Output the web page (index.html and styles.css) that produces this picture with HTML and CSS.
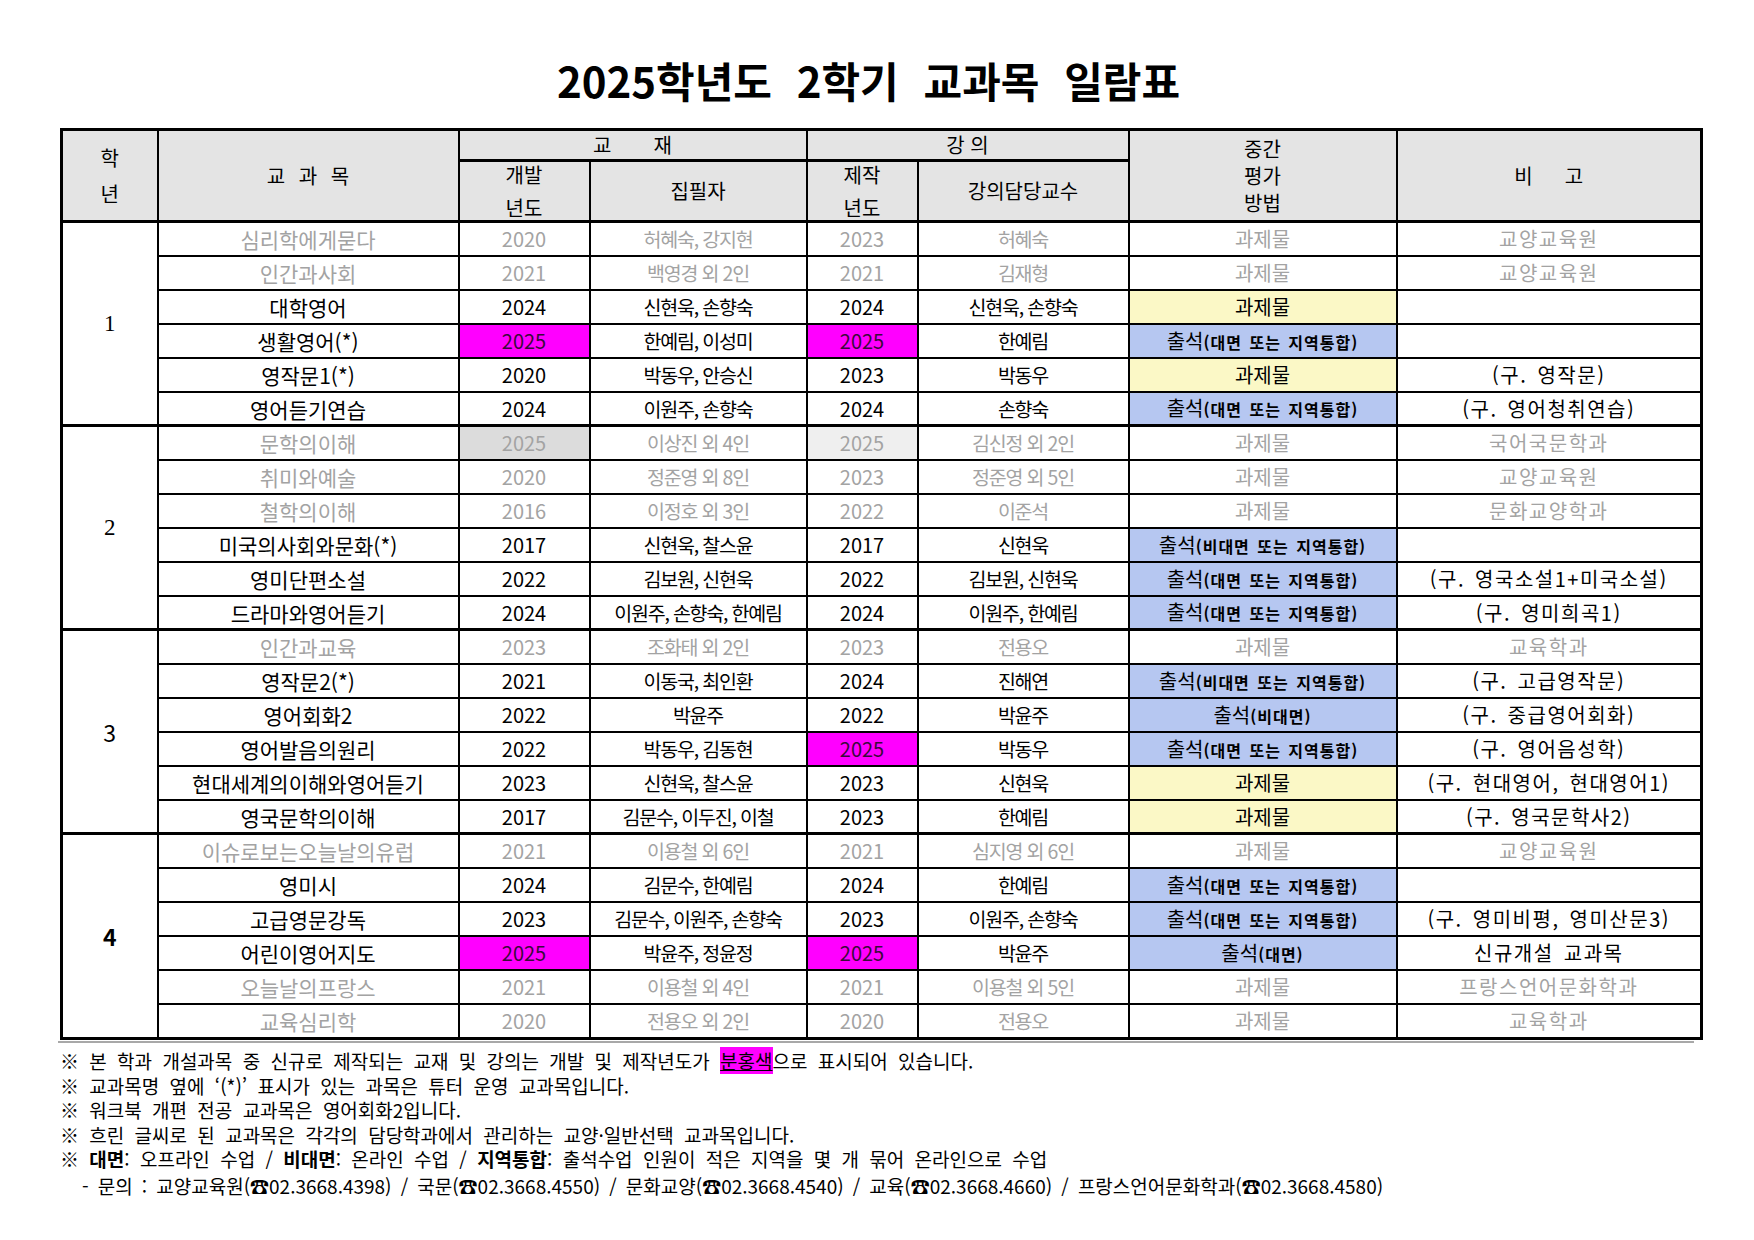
FILE: index.html
```html
<!DOCTYPE html>
<html lang="ko">
<head>
<meta charset="utf-8">
<title>2025학년도 2학기 교과목 일람표</title>
<link rel="stylesheet" href="styles.css">
</head>
<body>
<div class="page">
  <h1 class="title">2025학년도 2학기 교과목 일람표</h1>
  <table class="grid">
    <colgroup>
      <col class="c-year"><col class="c-course"><col class="c-dev"><col class="c-author"><col class="c-prod"><col class="c-prof"><col class="c-eval"><col class="c-note">
    </colgroup>
    <thead>
      <tr class="h1">
        <th rowspan="2" class="hyear"><span class="stack">학<br>년</span></th>
        <th rowspan="2" class="hcourse">교 과 목</th>
        <th colspan="2" class="hgroup"><span class="wide">교</span>재</th>
        <th colspan="2" class="hgroup">강 의</th>
        <th rowspan="2" class="heval"><span class="stack">중간<br>평가<br>방법</span></th>
        <th rowspan="2" class="hnote"><span class="wide2">비</span>고</th>
      </tr>
      <tr class="h2">
        <th class="two"><span class="stack">개발<br>년도</span></th>
        <th>집필자</th>
        <th class="two"><span class="stack">제작<br>년도</span></th>
        <th>강의담당교수</th>
      </tr>
    </thead>
    <tbody>
      <tr class="faded"><td rowspan="6" class="yr serif">1</td><td class="crs">심리학에게묻다</td><td>2020</td><td class="nm">허혜숙, 강지현</td><td>2023</td><td class="nm">허혜숙</td><td>과제물</td><td class="nt">교양교육원</td></tr>
      <tr class="faded"><td class="crs">인간과사회</td><td>2021</td><td class="nm">백영경 외 2인</td><td>2021</td><td class="nm">김재형</td><td>과제물</td><td class="nt">교양교육원</td></tr>
      <tr><td class="crs">대학영어</td><td>2024</td><td class="nm">신현욱, 손향숙</td><td>2024</td><td class="nm">신현욱, 손향숙</td><td class="yellow">과제물</td><td class="nt"></td></tr>
      <tr><td class="crs">생활영어(*)</td><td class="pink">2025</td><td class="nm">한예림, 이성미</td><td class="pink">2025</td><td class="nm">한예림</td><td class="blue">출석<small>(대면 또는 지역통합)</small></td><td class="nt"></td></tr>
      <tr><td class="crs">영작문1(*)</td><td>2020</td><td class="nm">박동우, 안승신</td><td>2023</td><td class="nm">박동우</td><td class="yellow">과제물</td><td class="nt">(구. 영작문)</td></tr>
      <tr class="last"><td class="crs">영어듣기연습</td><td>2024</td><td class="nm">이원주, 손향숙</td><td>2024</td><td class="nm">손향숙</td><td class="blue">출석<small>(대면 또는 지역통합)</small></td><td class="nt">(구. 영어청취연습)</td></tr>

      <tr class="faded"><td rowspan="6" class="yr serif">2</td><td class="crs">문학의이해</td><td class="gray">2025</td><td class="nm">이상진 외 4인</td><td class="lgray">2025</td><td class="nm">김신정 외 2인</td><td>과제물</td><td class="nt">국어국문학과</td></tr>
      <tr class="faded"><td class="crs">취미와예술</td><td>2020</td><td class="nm">정준영 외 8인</td><td>2023</td><td class="nm">정준영 외 5인</td><td>과제물</td><td class="nt">교양교육원</td></tr>
      <tr class="faded"><td class="crs">철학의이해</td><td>2016</td><td class="nm">이정호 외 3인</td><td>2022</td><td class="nm">이준석</td><td>과제물</td><td class="nt">문화교양학과</td></tr>
      <tr><td class="crs">미국의사회와문화(*)</td><td>2017</td><td class="nm">신현욱, 찰스윤</td><td>2017</td><td class="nm">신현욱</td><td class="blue">출석<small>(비대면 또는 지역통합)</small></td><td class="nt"></td></tr>
      <tr><td class="crs">영미단편소설</td><td>2022</td><td class="nm">김보원, 신현욱</td><td>2022</td><td class="nm">김보원, 신현욱</td><td class="blue">출석<small>(대면 또는 지역통합)</small></td><td class="nt">(구. 영국소설1+미국소설)</td></tr>
      <tr class="last"><td class="crs">드라마와영어듣기</td><td>2024</td><td class="nm">이원주, 손향숙, 한예림</td><td>2024</td><td class="nm">이원주, 한예림</td><td class="blue">출석<small>(대면 또는 지역통합)</small></td><td class="nt">(구. 영미희곡1)</td></tr>

      <tr class="faded"><td rowspan="6" class="yr">3</td><td class="crs">인간과교육</td><td>2023</td><td class="nm">조화태 외 2인</td><td>2023</td><td class="nm">전용오</td><td>과제물</td><td class="nt">교육학과</td></tr>
      <tr><td class="crs">영작문2(*)</td><td>2021</td><td class="nm">이동국, 최인환</td><td>2024</td><td class="nm">진해연</td><td class="blue">출석<small>(비대면 또는 지역통합)</small></td><td class="nt">(구. 고급영작문)</td></tr>
      <tr><td class="crs">영어회화2</td><td>2022</td><td class="nm">박윤주</td><td>2022</td><td class="nm">박윤주</td><td class="blue">출석<small>(비대면)</small></td><td class="nt">(구. 중급영어회화)</td></tr>
      <tr><td class="crs">영어발음의원리</td><td>2022</td><td class="nm">박동우, 김동현</td><td class="pink">2025</td><td class="nm">박동우</td><td class="blue">출석<small>(대면 또는 지역통합)</small></td><td class="nt">(구. 영어음성학)</td></tr>
      <tr><td class="crs">현대세계의이해와영어듣기</td><td>2023</td><td class="nm">신현욱, 찰스윤</td><td>2023</td><td class="nm">신현욱</td><td class="yellow">과제물</td><td class="nt">(구. 현대영어, 현대영어1)</td></tr>
      <tr class="last"><td class="crs">영국문학의이해</td><td>2017</td><td class="nm">김문수, 이두진, 이철</td><td>2023</td><td class="nm">한예림</td><td class="yellow">과제물</td><td class="nt">(구. 영국문학사2)</td></tr>

      <tr class="faded"><td rowspan="6" class="yr bold">4</td><td class="crs">이슈로보는오늘날의유럽</td><td>2021</td><td class="nm">이용철 외 6인</td><td>2021</td><td class="nm">심지영 외 6인</td><td>과제물</td><td class="nt">교양교육원</td></tr>
      <tr><td class="crs">영미시</td><td>2024</td><td class="nm">김문수, 한예림</td><td>2024</td><td class="nm">한예림</td><td class="blue">출석<small>(대면 또는 지역통합)</small></td><td class="nt"></td></tr>
      <tr><td class="crs">고급영문강독</td><td>2023</td><td class="nm">김문수, 이원주, 손향숙</td><td>2023</td><td class="nm">이원주, 손향숙</td><td class="blue">출석<small>(대면 또는 지역통합)</small></td><td class="nt">(구. 영미비평, 영미산문3)</td></tr>
      <tr><td class="crs">어린이영어지도</td><td class="pink">2025</td><td class="nm">박윤주, 정윤정</td><td class="pink">2025</td><td class="nm">박윤주</td><td class="blue">출석<small>(대면)</small></td><td class="nt">신규개설 교과목</td></tr>
      <tr class="faded"><td class="crs">오늘날의프랑스</td><td>2021</td><td class="nm">이용철 외 4인</td><td>2021</td><td class="nm">이용철 외 5인</td><td>과제물</td><td class="nt">프랑스언어문화학과</td></tr>
      <tr class="faded"><td class="crs">교육심리학</td><td>2020</td><td class="nm">전용오 외 2인</td><td>2020</td><td class="nm">전용오</td><td>과제물</td><td class="nt">교육학과</td></tr>
    </tbody>
  </table>
  <div class="shadow-line"></div>
  <ul class="notes">
    <li>※ 본 학과 개설과목 중 신규로 제작되는 교재 및 강의는 개발 및 제작년도가 <span class="mark">분홍색</span>으로 표시되어 있습니다.</li>
    <li>※ 교과목명 옆에 ‘(*)’ 표시가 있는 과목은 튜터 운영 교과목입니다.</li>
    <li>※ 워크북 개편 전공 교과목은 영어회화2입니다.</li>
    <li>※ 흐린 글씨로 된 교과목은 각각의 담당학과에서 관리하는 교양·일반선택 교과목입니다.</li>
    <li>※ <b>대면</b>: 오프라인 수업 / <b>비대면</b>: 온라인 수업 / <b>지역통합</b>: 출석수업 인원이 적은 지역을 몇 개 묶어 온라인으로 수업</li>
    <li class="contact">- 문의 : 교양교육원(☎02.3668.4398) / 국문(☎02.3668.4550) / 문화교양(☎02.3668.4540) / 교육(☎02.3668.4660) / 프랑스언어문화학과(☎02.3668.4580)</li>
  </ul>
</div>
</body>
</html>
```

FILE: styles.css
```css
html, body {
  margin: 0;
  padding: 0;
  background: #ffffff;
}

body {
  font-family: "Noto Sans CJK KR", "Noto Sans", sans-serif;
  color: #000000;
}

.page {
  padding: 59px 0 0 60px;
  width: 1641px;
}

.title {
  margin: 0 0 27px 0;
  padding-right: 24px;
  font-size: 42px;
  line-height: 42px;
  font-weight: 700;
  text-align: center;
  letter-spacing: 0;
  word-spacing: 13px;
}

.grid {
  border-collapse: collapse;
  table-layout: fixed;
  width: 1641px;
  border: 3px solid #000;
}

.c-year { width: 96px; }
.c-course { width: 301px; }
.c-dev { width: 131px; }
.c-author { width: 217px; }
.c-prod { width: 111px; }
.c-prof { width: 211px; }
.c-eval { width: 268px; }
.c-note { width: 305px; }

.grid th,
.grid td {
  border: 2px solid #000;
  padding: 0;
  text-align: center;
  vertical-align: middle;
  font-size: 20px;
  white-space: nowrap;
  overflow: hidden;
}

.grid th {
  background: #e4e4e4;
  font-weight: 400;
}

.h1 th {
  height: 28px;
  line-height: 24px;
}

.h2 th {
  height: 58px;
  line-height: 26px;
}

.grid thead th {
  border-bottom-width: 3px;
}

.stack {
  display: block;
}

.hyear .stack { line-height: 36px; }
.two .stack { line-height: 33px; margin: -4px 0 -4px 0; }
.heval .stack { line-height: 27px; }

.hcourse { word-spacing: 8px; }
.wide { margin-right: 42px; }
.wide2 { margin-right: 32px; }

.grid td {
  height: 32px;
  line-height: 26px;
}

.grid tr.last td {
  height: 31px;
  border-bottom-width: 3px;
}

.grid td.crs {
  font-size: 21px;
}

.grid td.nm {
  font-size: 19.5px;
  letter-spacing: -1.2px;
  word-spacing: 0;
}

.grid td.nt {
  letter-spacing: 1.5px;
  word-spacing: 3px;
}

.grid td.yr {
  background: #fff;
  color: #000;
  font-size: 23px;
  border-bottom-width: 3px;
}

.yr.serif { font-family: "Liberation Serif", serif; }
.yr.bold { font-weight: 700; }

.faded td {
  color: #a3a3a3;
}

.grid td.pink {
  background: #ff00ff;
  color: #3a0a3a;
}

.grid td.yellow { background: #fbf8c6; }
.grid td.blue { background: #b6c7f1; }
.grid td.gray { background: #dcdcdc; }
.grid td.lgray { background: #efefef; }

.blue small {
  font-size: 16px;
  font-weight: 700;
  letter-spacing: 1px;
  word-spacing: 2px;
}

.shadow-line {
  height: 2px;
  background: #a8a8a8;
  margin: 1px 0 0 -2px;
  width: 1636px;
}

.notes {
  list-style: none;
  margin: 6px 0 0 0;
  padding: 0;
  font-size: 19px;
  line-height: 24.6px;
  word-spacing: 5px;
}

.notes li {
  white-space: nowrap;
}

.notes .contact {
  padding-left: 22px;
  margin-top: 2px;
  word-spacing: 3.8px;
}

.mark {
  background: #ff00ff;
  text-decoration: underline;
}
```
